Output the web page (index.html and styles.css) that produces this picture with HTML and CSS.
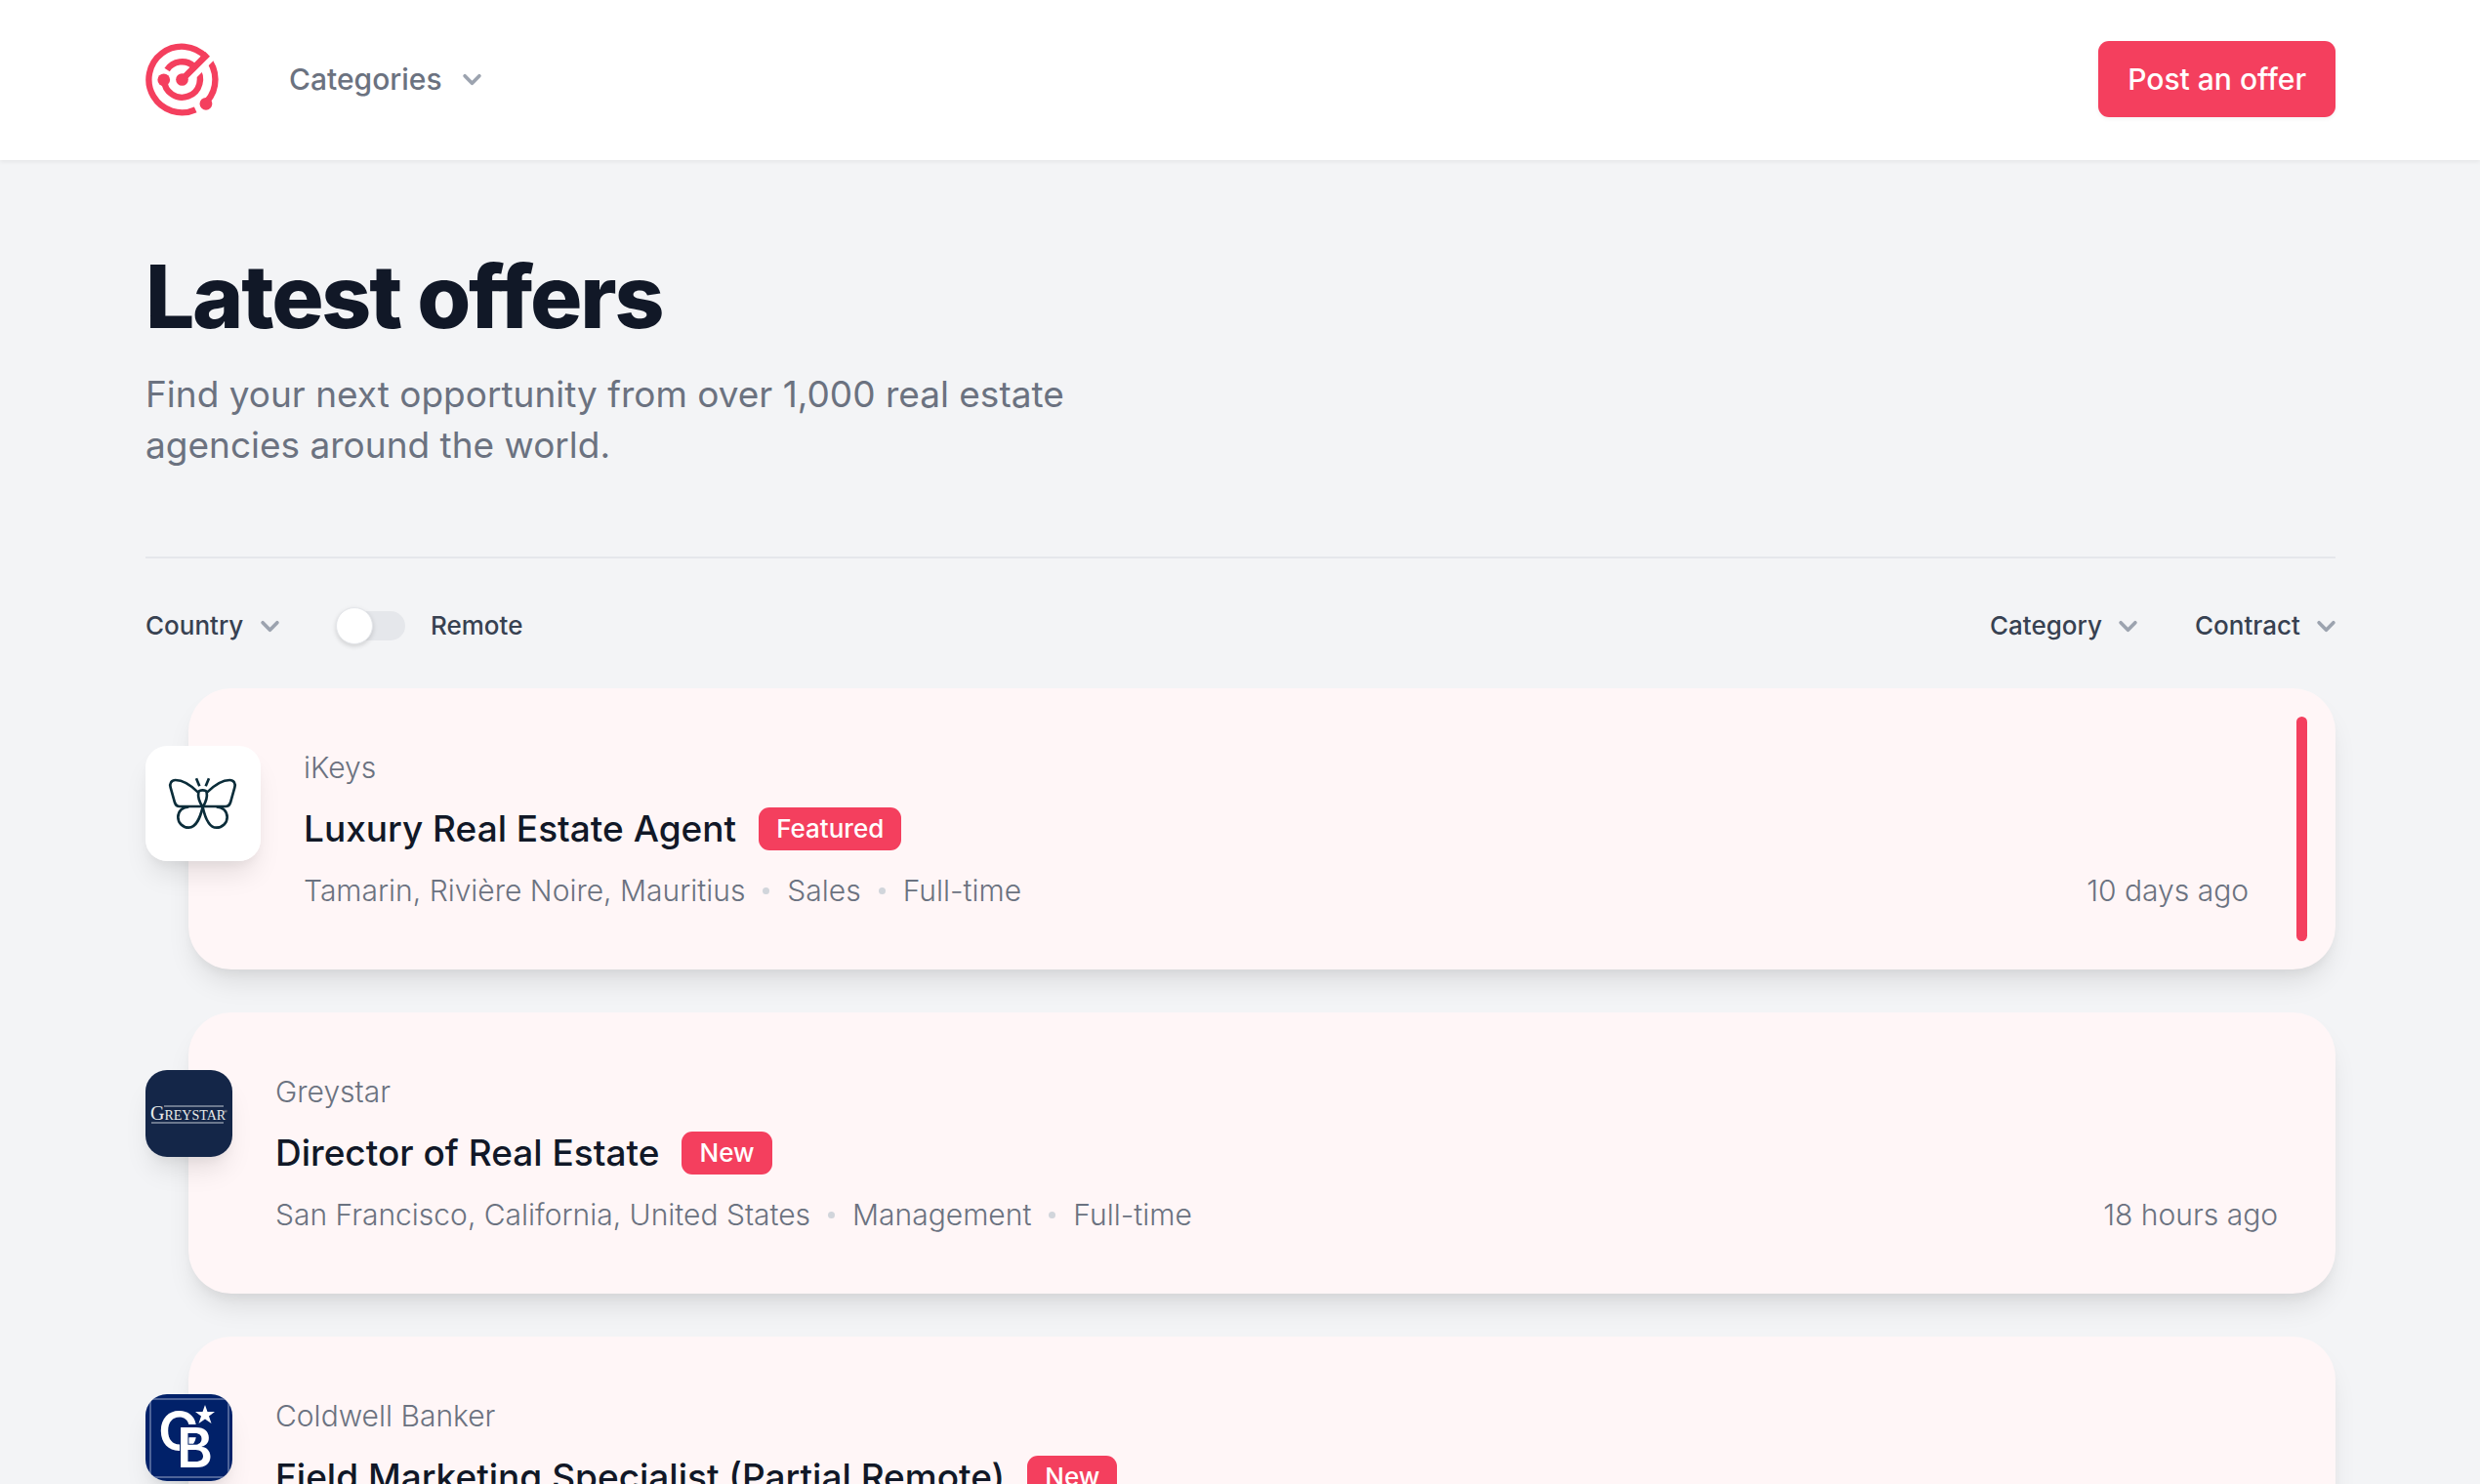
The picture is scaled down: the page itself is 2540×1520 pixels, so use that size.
FILE: index.html
```html
<!DOCTYPE html>
<html lang="en">
<head>
  <meta charset="UTF-8">
  <meta name="viewport" content="width=device-width, initial-scale=1.0">
  <title>Latest offers</title>
  <link rel="stylesheet" href="styles.css">
</head>
<body>
  <header class="navbar">
    <a class="brand" href="#" aria-label="Home">
      <svg class="brand-icon" viewBox="58 71 224 224" fill="none" stroke="#f43f5e" stroke-width="19">
        <path d="M245 115A101 101 0 0 1 246 250" />
        <path d="M115 183A55 55 0 1 0 212 147" />
        <path d="M180 173L290 63" stroke="#fff" stroke-width="54" />
        <path d="M243 114A101 101 0 1 0 211 275" />
        <path d="M124 153A55 55 0 0 1 206 142" />
        <path d="M170 183L248 105" stroke-width="20" />
        <g fill="#f43f5e" stroke="none">
          <circle cx="170" cy="183" r="19" />
          <circle cx="114" cy="184" r="19" />
          <circle cx="243" cy="257" r="19" />
        </g>
      </svg>
    </a>
    <button class="nav-menu" type="button" aria-haspopup="true">
      Categories
      <svg class="chevron" viewBox="0 0 20 20"><path d="M6 8l4 4 4-4" /></svg>
    </button>
    <a class="post-btn" href="#">Post an offer</a>
  </header>

  <main class="page">
    <section class="intro">
      <h1>Latest offers</h1>
      <p>Find your next opportunity from over 1,000 real estate agencies around the world.</p>
    </section>

    <form class="filters">
      <div class="dropdown">
        <select aria-label="Country"><option>Country</option></select>
        <svg class="chevron" viewBox="0 0 20 20"><path d="M6 8l4 4 4-4" /></svg>
      </div>
      <div class="switch">
        <input type="checkbox" id="remote">
        <label for="remote">Remote</label>
      </div>
      <div class="dropdown push">
        <select aria-label="Category"><option>Category</option></select>
        <svg class="chevron" viewBox="0 0 20 20"><path d="M6 8l4 4 4-4" /></svg>
      </div>
      <div class="dropdown">
        <select aria-label="Contract"><option>Contract</option></select>
        <svg class="chevron" viewBox="0 0 20 20"><path d="M6 8l4 4 4-4" /></svg>
      </div>
    </form>

    <div class="offers">
      <article class="offer featured">
        <svg class="logo" viewBox="58 222 354 354" fill="none" stroke="#0b2d3a" stroke-width="8">
          <rect x="58" y="222" width="354" height="354" fill="#fff" stroke="none" />
          <path d="M220 365C200 345 172 327 150 327C138 327 131 337 135 350L148 396C151 405 155 408 163 408H304C312 408 316 405 319 396L332 350C336 337 329 327 317 327C295 327 267 345 247 365" />
          <path d="M234 410C226 442 215 473 191 473C172 473 158 458 158 441C158 423 172 409 191 409" />
          <path d="M234 410C241 442 252 473 276 473C295 473 309 458 309 441C309 423 295 409 276 409" />
          <path d="M234 410C222 393 219 375 221 364C224 356 243 356 246 364C248 375 245 393 234 410Z" />
          <path d="M214 322L224 346M253 322L243 346" />
        </svg>
        <div class="offer-body">
          <p class="company">iKeys</p>
          <h2>Luxury Real Estate Agent <span class="badge">Featured</span></h2>
          <div class="meta">
            <ul>
              <li>Tamarin, Rivière Noire, Mauritius</li>
              <li>Sales</li>
              <li>Full-time</li>
            </ul>
            <time>10 days ago</time>
          </div>
        </div>
      </article>

      <article class="offer">
        <svg class="logo" viewBox="0 0 89 89">
          <rect width="89" height="89" fill="#142648" />
          <text class="wordmark" x="5" y="51"><tspan class="wordmark-cap">G</tspan>REYSTAR</text>
          <text class="wordmark-reg" x="80" y="44">®</text>
          <path d="M19 37H80M6 54H80" stroke="#c3cad3" />
        </svg>
        <div class="offer-body">
          <p class="company">Greystar</p>
          <h2>Director of Real Estate <span class="badge">New</span></h2>
          <div class="meta">
            <ul>
              <li>San Francisco, California, United States</li>
              <li>Management</li>
              <li>Full-time</li>
            </ul>
            <time>18 hours ago</time>
          </div>
        </div>
      </article>

      <article class="offer">
        <svg class="logo" viewBox="0 0 89 89">
          <rect width="89" height="89" fill="#012169" />
          <path d="M5 0V89M85 0V89M0 5H89M0 85H89" stroke="#9aa7c9" />
          <g class="monogram">
            <text x="13" y="58">C</text>
            <text x="32" y="75">B</text>
          </g>
          <path d="M61 11L63.500 18H71L65 22.500L67.500 30L61 25.500L54.500 30L57 22.500L51 18H58.500Z" fill="#fff" />
        </svg>
        <div class="offer-body">
          <p class="company">Coldwell Banker</p>
          <h2>Field Marketing Specialist (Partial Remote) <span class="badge">New</span></h2>
        </div>
      </article>
    </div>
  </main>
</body>
</html>
```
FILE: styles.css
```css
* { box-sizing: border-box; margin: 0; padding: 0; }
html { overflow: hidden; }
body {
  font-family: Inter, sans-serif;
  font-size: 30px; line-height: 44px;
  background: #f3f4f6; color: #6b7280;
}
a { text-decoration: none; }
button, select { font: inherit; color: inherit; background: none; border: none; }

.navbar {
  display: flex; align-items: center;
  padding: 42px 148px 44px 149px;
  background: #fff;
  box-shadow: 0 2px 4px rgba(0, 0, 0, 0.06);
}
.brand-icon { display: block; width: 75px; height: 75px; }
.nav-menu {
  display: flex; align-items: center; gap: 12px;
  margin-left: 72px; font-weight: 500; cursor: pointer;
}
.chevron {
  width: 37px; height: 37px;
  fill: none; stroke: #9ca3af; stroke-width: 2;
  stroke-linecap: round; stroke-linejoin: round;
}
.post-btn {
  margin-left: auto; padding: 17px 30px;
  background: #f43f5e; color: #fff;
  font-weight: 500; border-radius: 11px;
  box-shadow: 0 2px 4px rgba(0, 0, 0, 0.05);
}

.page { padding: 96px 148px 118px 149px; }
.intro { padding-bottom: 88px; border-bottom: 2px solid #e5e7eb; }
h1 {
  font-size: 89px; line-height: 88px; font-weight: 800;
  letter-spacing: -0.025em; color: #111827;
}
.intro p {
  max-width: 1000px; margin-top: 30px;
  font-size: 37px; line-height: 52px;
}

.filters {
  display: flex; align-items: center; gap: 59px;
  padding: 47px 0 42px;
  font-size: 26px; font-weight: 500; color: #374151;
}
.dropdown { display: flex; align-items: center; margin-right: -9px; }
.dropdown select { appearance: none; cursor: pointer; }
.dropdown .chevron { margin-left: 8px; pointer-events: none; }
.push { margin-left: auto; }
.switch { display: flex; align-items: center; gap: 26px; }
.switch input {
  appearance: none; display: flex; align-items: center;
  width: 70px; height: 30px;
  border-radius: 15px; background: #e5e7eb;
}
.switch input::before {
  content: ""; width: 36px; height: 36px; flex: none;
  margin: 0 -1px;
  border: 1px solid #e5e7eb; border-radius: 50%; background: #fff;
  box-shadow: 0 2px 5px rgba(0, 0, 0, 0.15);
}
.switch input:checked { justify-content: flex-end; background: #f43f5e; }

.offers { display: flex; flex-direction: column; gap: 44px; }
.offer {
  display: flex; gap: 44px; position: relative;
  margin-left: 44px; padding: 59px 59px 59px 0;
  font-weight: 300;
  background: #fff6f7; border-radius: 44px;
  box-shadow: 0 18px 28px -6px rgba(0, 0, 0, 0.1), 0 7px 11px -4px rgba(0, 0, 0, 0.05);
}
.logo {
  flex: none; width: 89px; height: 89px;
  margin-left: -44px; border-radius: 22px;
  box-shadow: 0 18px 28px -6px rgba(0, 0, 0, 0.1), 0 7px 11px -4px rgba(0, 0, 0, 0.05);
}
.featured { padding-right: 89px; }
.featured .logo { width: 118px; height: 118px; }
.featured::after {
  content: ""; position: absolute; top: 29px; right: 29px; bottom: 29px;
  width: 11px; border-radius: 6px; background: #f43f5e;
}
.wordmark, .wordmark-reg { font-family: "Liberation Serif", serif; fill: #e8ebe9; }
.wordmark { font-size: 14px; }
.wordmark-cap { font-size: 20px; }
.wordmark-reg { font-size: 5px; }
.monogram {
  font-family: Inter, sans-serif; font-size: 56px; font-weight: 600;
  fill: #fff; stroke: #012169; stroke-width: 2px; paint-order: stroke;
}
.offer-body { flex: 1; display: flex; flex-direction: column; gap: 15px; }
h2 {
  display: flex; align-items: center; gap: 23px;
  font-size: 37px; line-height: 52px; font-weight: 500; color: #111827;
}
.badge {
  padding: 0 18px; border-radius: 11px;
  background: #f43f5e; color: #fff;
  font-size: 26px; line-height: 44px;
}
.meta, .meta ul, .meta li { display: flex; align-items: center; }
.meta { justify-content: space-between; }
.meta ul { list-style: none; }
.meta li + li::before {
  content: ""; width: 7px; height: 7px; margin: 0 18px;
  border-radius: 50%; background: #d1d5db;
}
```
